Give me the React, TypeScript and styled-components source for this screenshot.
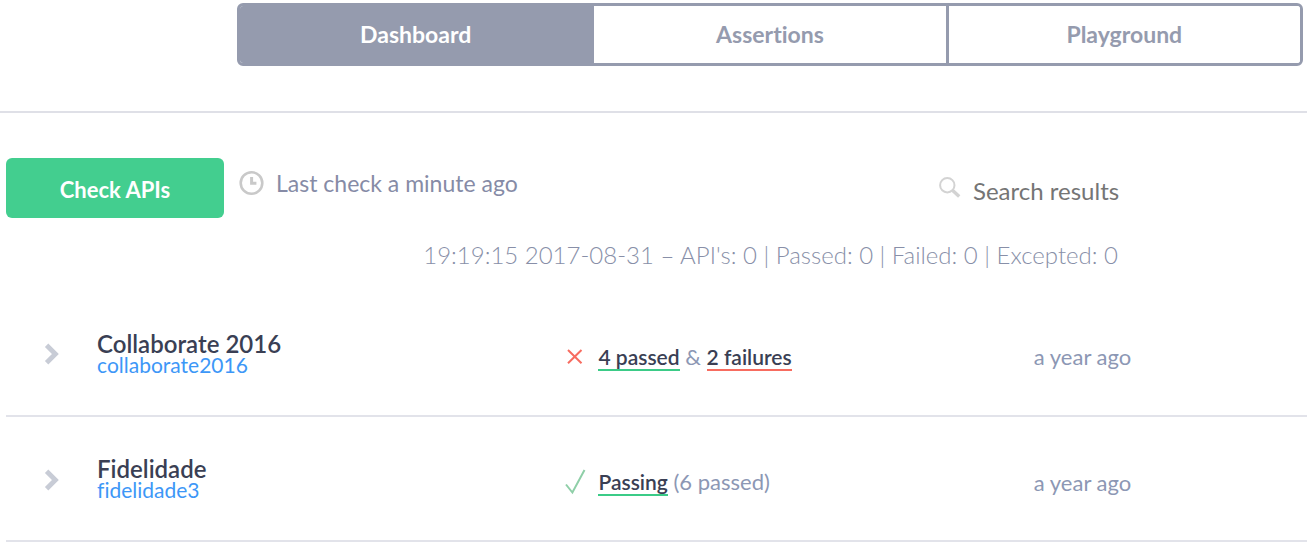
import React from "react";
import styled, { createGlobalStyle } from "styled-components";

const GlobalStyle = createGlobalStyle`
  * { box-sizing: border-box; }
  body {
    margin: 0;
    background: #fff;
    color: #3a3f54;
    font-family: Lato, "Open Sans", sans-serif;
    font-size: 22px;
    font-variant-ligatures: none;
  }
  button, input { font-variant-ligatures: none; }
`;

const Header = styled.header`
  padding: 3px 4px 45px 237px;
  border-bottom: 2px solid #dfe0e7;
`;

const Tabs = styled.nav`
  display: flex;
  border: 3px solid #959bae;
  border-radius: 6px;
  overflow: hidden;
`;

const Tab = styled.button<{ $active?: boolean }>`
  flex: 1;
  height: 57px;
  padding: 0 0 1px;
  border: 0;
  border-right: 3px solid #959bae;
  background: ${(p) => (p.$active ? "#959bae" : "#fff")};
  color: ${(p) => (p.$active ? "#fff" : "#959bae")};
  font-family: inherit;
  font-size: 23px;
  font-weight: bold;
  &:last-child { border-right: 0; }
`;

const Main = styled.main`
  padding: 45px 0 0 6px;
`;

const Toolbar = styled.div`
  display: flex;
  align-items: flex-start;
  padding-right: 186px;
`;

const CheckButton = styled.button`
  width: 218px;
  height: 60px;
  padding: 2px 0 0;
  border: 0;
  border-radius: 6px;
  background: #43ce8f;
  color: #fff;
  font-family: inherit;
  font-size: 22px;
  font-weight: bold;
`;

const LastCheck = styled.div`
  display: flex;
  align-items: center;
  gap: 12px;
  height: 50px;
  margin-left: 15px;
  color: #868ba6;
  font-size: 23px;
  line-height: 26px;
`;

const Search = styled.label`
  display: flex;
  align-items: center;
  gap: 12px;
  margin-left: auto;
  height: 64px;
`;

const SearchInput = styled.input`
  width: 148px;
  padding: 0;
  border: 0;
  outline: 0;
  background: none;
  font-family: inherit;
  font-size: 24px;
  &::placeholder { color: #757575; opacity: 1; }
`;

const Summary = styled.p`
  margin: 0;
  padding: 18px 189px 21px 0;
  color: #888fa8;
  font-size: 24px;
  font-weight: 300;
  line-height: 30px;
  text-align: right;
`;

const Results = styled.table`
  width: 100%;
  table-layout: fixed;
  border-collapse: collapse;
`;

const Row = styled.tr`
  height: 125px;
  border-bottom: 2px solid #e2e3ea;
`;

const Cell = styled.td`
  padding: 7px 0 0;
  color: #8c97b4;
  white-space: nowrap;
`;

const ToggleCell = styled(Cell)`
  padding: 5px 0 0 38px;
`;

const NameCell = styled(Cell)`
  padding: 1px 0 0;
`;

const Toggle = styled.button`
  display: block;
  padding: 0;
  border: 0;
  background: none;
`;

const Name = styled.div`
  color: #3a3f54;
  font-size: 24px;
  font-weight: 600;
  line-height: 21px;
`;

const Slug = styled.a`
  display: block;
  color: #3d97f7;
  font-size: 21px;
  line-height: 21px;
  text-decoration: none;
`;

const Status = styled.div`
  display: flex;
  align-items: center;
  gap: 12px;
`;

const Count = styled.span<{ $tone: "pass" | "fail" }>`
  display: inline-block;
  border-bottom: 2px solid ${(p) => (p.$tone === "pass" ? "#3bcb87" : "#f76c60")};
  color: #3a3f54;
  font-size: 21px;
  font-weight: 600;
  line-height: 24px;
`;

const Clock = () => (
  <svg width="25" height="26" viewBox="0 0 25 26" fill="none" stroke="#c9c9c9" aria-hidden="true">
    <circle cx="12.5" cy="13" r="10.8" strokeWidth="2.6" />
    <path d="M12.600 7v6.200h4.800" strokeWidth="3" />
  </svg>
);

const Magnifier = () => (
  <svg width="22" height="28" viewBox="0 0 22 28" fill="none" stroke="#d3d3d3" aria-hidden="true">
    <circle cx="8.3" cy="9.2" r="7.2" strokeWidth="2" />
    <path d="M13.7 14.5l6.5 6" strokeWidth="3.4" />
  </svg>
);

const Chevron = () => (
  <svg width="16" height="22" viewBox="0 0 16 22" fill="none" stroke="#c8ccd6" aria-hidden="true">
    <path d="M2.6 2.3l8.8 8.7-8.8 8.7" strokeWidth="4.8" />
  </svg>
);

const Cross = () => (
  <svg width="21" height="22" viewBox="0 0 21 22" fill="none" stroke="#f76c60" aria-hidden="true">
    <path d="M3 4l13.500 13.300M16.500 4L3 17.300" strokeWidth="2" />
  </svg>
);

const Tick = () => (
  <svg width="21" height="26" viewBox="0 0 21 26" fill="none" stroke="#8fcfa8" aria-hidden="true">
    <path d="M1 15.500l6.400 8L19.500 1" strokeWidth="2" />
  </svg>
);

interface Api {
  name: string;
  slug: string;
  passed: number;
  failures: number;
  checked: string;
}

const apis: Api[] = [
  { name: "Collaborate 2016", slug: "collaborate2016", passed: 4, failures: 2, checked: "a year ago" },
  { name: "Fidelidade", slug: "fidelidade3", passed: 6, failures: 0, checked: "a year ago" },
];

const ApiRow = ({ api }: { api: Api }) => (
  <Row>
    <ToggleCell>
      <Toggle aria-label={`Expand ${api.name}`}><Chevron /></Toggle>
    </ToggleCell>
    <NameCell>
      <Name>{api.name}</Name>
      <Slug href={`#${api.slug}`}>{api.slug}</Slug>
    </NameCell>
    <Cell>
      <Status>
        {api.failures > 0 ? <Cross /> : <Tick />}
        {api.failures > 0 ? (
          <span>
            <Count $tone="pass">{`${api.passed} passed`}</Count> &amp;{" "}
            <Count $tone="fail">{`${api.failures} failures`}</Count>
          </span>
        ) : (
          <span>
            <Count $tone="pass">Passing</Count> {`(${api.passed} passed)`}
          </span>
        )}
      </Status>
    </Cell>
    <Cell>{api.checked}</Cell>
  </Row>
);

export default function App() {
  return (
    <>
      <GlobalStyle />
      <Header>
        <Tabs>
          <Tab $active>Dashboard</Tab>
          <Tab>Assertions</Tab>
          <Tab>Playground</Tab>
        </Tabs>
      </Header>
      <Main>
        <Toolbar>
          <CheckButton>Check APIs</CheckButton>
          <LastCheck><Clock />Last check a minute ago</LastCheck>
          <Search>
            <Magnifier />
            <SearchInput type="text" placeholder="Search results" aria-label="Search results" />
          </Search>
        </Toolbar>
        <Summary>19:19:15 2017-08-31 – API's: 0 | Passed: 0 | Failed: 0 | Excepted: 0</Summary>
        <Results>
          <colgroup>
            <col style={{ width: "7%" }} />
            <col style={{ width: "36%" }} />
            <col style={{ width: "36%" }} />
            <col style={{ width: "21%" }} />
          </colgroup>
          <tbody>
            {apis.map((api) => <ApiRow key={api.slug} api={api} />)}
          </tbody>
        </Results>
      </Main>
    </>
  );
}
